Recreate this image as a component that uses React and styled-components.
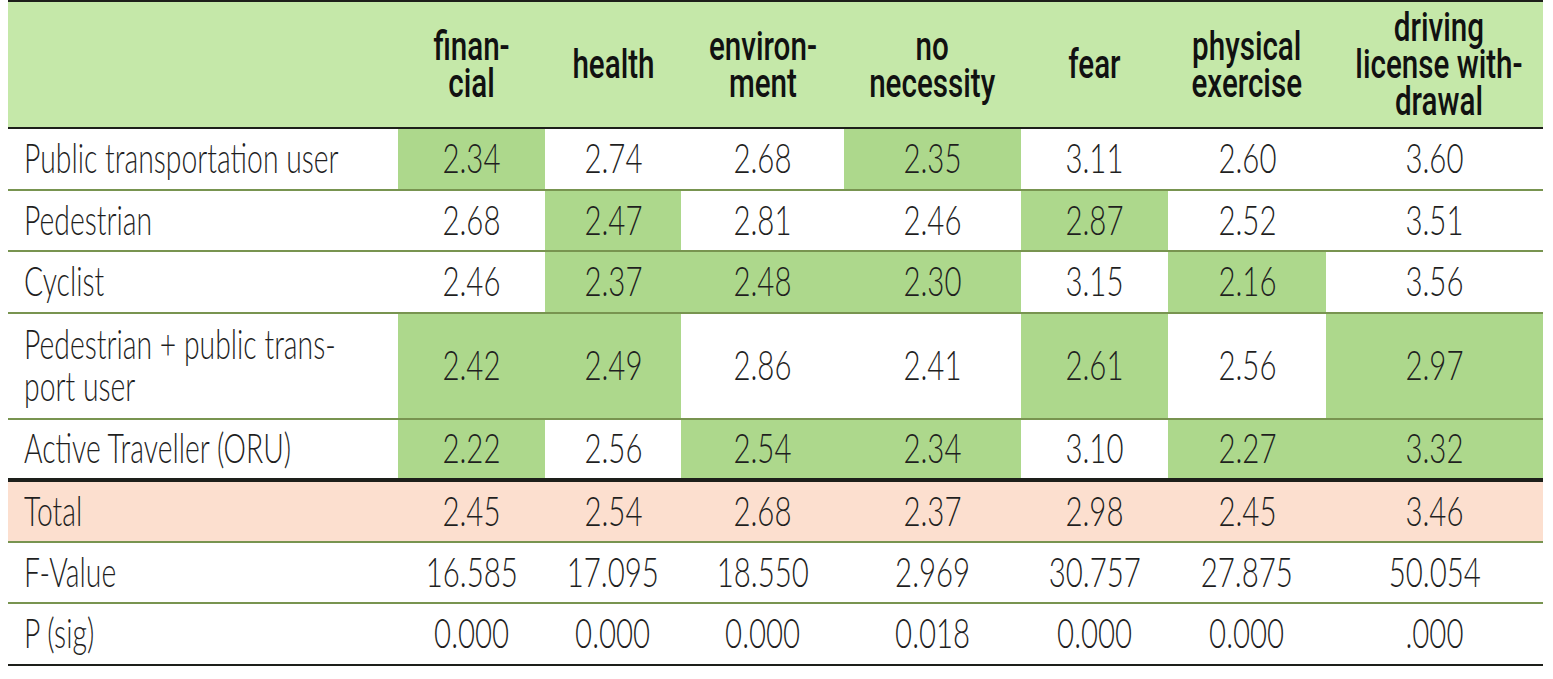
import React from "react";
import styled, { createGlobalStyle } from "styled-components";

const GlobalStyle = createGlobalStyle`
  html, body {
    margin: 0;
    padding: 0;
    background: #ffffff;
  }
  body {
    font-family: Roboto, "Liberation Sans", sans-serif;
  }
`;

const Page = styled.div`
  padding: 0 10px 0 8px;
`;

const Table = styled.table`
  width: 1535px;
  table-layout: fixed;
  border-collapse: separate;
  border-spacing: 0;
`;

const Col = styled.col`
  width: ${(p) => p.$w}px;
`;

const HeadCell = styled.th`
  box-sizing: border-box;
  height: 129px;
  padding: 0;
  background: #c5e8a9;
  border-top: 2px solid #1d1f1a;
  border-bottom: 2px solid #1d1f1a;
  color: #111;
  font-family: Roboto, "Liberation Sans", sans-serif;
  font-weight: 500;
  font-size: 40px;
  line-height: 37px;
  text-align: center;
  vertical-align: middle;
  white-space: nowrap;
`;

const Row = styled.tr``;

const Cell = styled.td`
  box-sizing: border-box;
  height: ${(p) => p.$h}px;
  padding: 0 0 4px;
  border-bottom: ${(p) => p.$line};
  background: ${(p) => p.$bg};
  color: #1f1f1f;
  font-family: Lato, Roboto, "Liberation Sans", sans-serif;
  font-weight: 300;
  font-size: 42px;
  line-height: 42px;
  text-align: center;
  vertical-align: middle;
  white-space: nowrap;
`;

const LabelCell = styled(Cell)`
  text-align: left;
  padding-left: 16px;
`;

const Squeeze = styled.span`
  display: inline-block;
  transform: scaleX(${(p) => p.$sx});
  transform-origin: ${(p) => p.$origin || "center"};
`;

const GREEN_LINE = "2px solid #789450";
const DARK_LINE = "2px solid #1d1f1a";
const THICK_LINE = "4px solid #1d1f1a";

const HL = "#add88c";
const TOTAL = "#fcdfcf";

const widths = [390, 147, 136, 163, 177, 147, 158, 217];

const headers = [
  ["finan-", "cial"],
  ["health"],
  ["environ-", "ment"],
  ["no", "necessity"],
  ["fear"],
  ["physical", "exercise"],
  ["driving", "license with-", "drawal"],
];

// h = row height incl. bottom rule, hl = highlighted column indexes
const rows = [
  { label: ["Public transportation user"], values: ["2.34", "2.74", "2.68", "2.35", "3.11", "2.60", "3.60"], hl: [0, 3], h: 62, line: GREEN_LINE },
  { label: ["Pedestrian"], values: ["2.68", "2.47", "2.81", "2.46", "2.87", "2.52", "3.51"], hl: [1, 4], h: 61, line: GREEN_LINE },
  { label: ["Cyclist"], values: ["2.46", "2.37", "2.48", "2.30", "3.15", "2.16", "3.56"], hl: [1, 2, 3, 5], h: 62, line: GREEN_LINE },
  { label: ["Pedestrian + public trans-", "port user"], values: ["2.42", "2.49", "2.86", "2.41", "2.61", "2.56", "2.97"], hl: [0, 1, 4, 6], h: 106, line: GREEN_LINE },
  { label: ["Active Traveller (ORU)"], values: ["2.22", "2.56", "2.54", "2.34", "3.10", "2.27", "3.32"], hl: [0, 2, 3, 5, 6], h: 62, line: THICK_LINE },
  { label: ["Total"], values: ["2.45", "2.54", "2.68", "2.37", "2.98", "2.45", "3.46"], hl: [], h: 61, line: GREEN_LINE, bg: TOTAL },
  { label: ["F-Value"], values: ["16.585", "17.095", "18.550", "2.969", "30.757", "27.875", "50.054"], hl: [], h: 61, line: GREEN_LINE },
  { label: ["P (sig)"], values: ["0.000", "0.000", "0.000", "0.018", "0.000", "0.000", ".000"], hl: [], h: 62, line: DARK_LINE },
];

function Lines({ parts }) {
  return parts.map((t, i) => (
    <React.Fragment key={i}>
      {i > 0 && <br />}
      {t}
    </React.Fragment>
  ));
}

export default function App() {
  return (
    <Page>
      <GlobalStyle />
      <Table>
        <colgroup>
          {widths.map((w, i) => (
            <Col key={i} $w={w} />
          ))}
        </colgroup>
        <thead>
          <tr>
            <HeadCell />
            {headers.map((h, i) => (
              <HeadCell key={i}>
                <Squeeze $sx={0.74}>
                  <Lines parts={h} />
                </Squeeze>
              </HeadCell>
            ))}
          </tr>
        </thead>
        <tbody>
          {rows.map((r, ri) => (
            <Row key={ri}>
              <LabelCell $h={r.h} $line={r.line} $bg={r.bg || "#fff"}>
                <Squeeze $sx={0.675} $origin="left">
                  <Lines parts={r.label} />
                </Squeeze>
              </LabelCell>
              {r.values.map((v, ci) => (
                <Cell
                  key={ci}
                  $h={r.h}
                  $line={r.line}
                  $bg={r.bg || (r.hl.includes(ci) ? HL : "#fff")}
                >
                  <Squeeze $sx={0.7}>{v}</Squeeze>
                </Cell>
              ))}
            </Row>
          ))}
        </tbody>
      </Table>
    </Page>
  );
}
